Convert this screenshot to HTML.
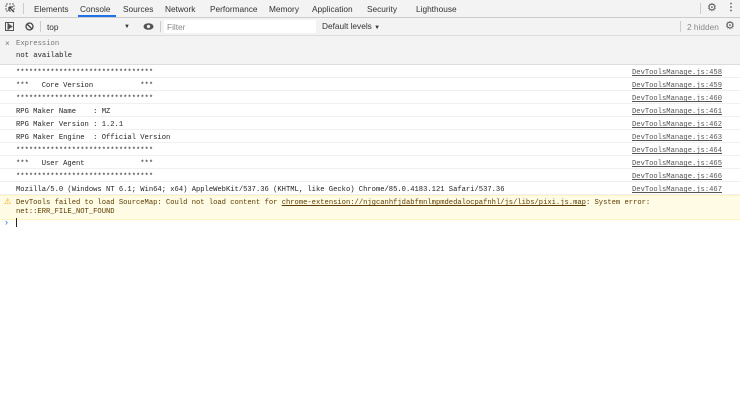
<!DOCTYPE html><html><head><style>
body{margin:0;width:740px;height:408px;background:#fff;font-family:"Liberation Sans",sans-serif;overflow:hidden;position:relative}
.a{position:absolute}
.tabs{top:0;left:0;width:740px;height:17px;background:#f3f3f3;border-bottom:1px solid #ccc;font-size:8.3px;color:#333}
.tabs span{position:absolute;top:4px}
.tb{top:18px;left:0;width:740px;height:17px;background:#f3f3f3;border-bottom:1px solid #ddd;font-size:8.3px;color:#333}
.exp{top:36px;left:0;width:740px;height:28px;background:#f3f3f3;border-bottom:1px solid #ddd;font-family:"Liberation Mono",monospace;font-size:7.2px}
.row{position:absolute;left:0;width:740px;height:12px;border-bottom:1px solid #f0f0f0;font-family:"Liberation Mono",monospace;font-size:7.15px;color:#222;white-space:pre}
.row .t{position:absolute;left:16px;top:4px}
.row .s{position:absolute;left:632px;top:4px;text-decoration:underline;color:#555}
</style></head><body>
<div class="a tabs">
<svg class="a" style="left:5px;top:3px" width="11" height="11"><rect x="1" y="1" width="8" height="7" fill="none" stroke="#666" stroke-dasharray="2 1"/><path d="M4 4l5 5M4 4v4M4 4h4" stroke="#444" stroke-width="1.3"/></svg>
<div class="a" style="left:23px;top:3px;width:1px;height:11px;background:#ccc"></div>
<span style="left:34px">Elements</span>
<span style="left:80px">Console</span>
<div class="a" style="left:78px;top:15px;width:38px;height:2px;background:#1a73e8"></div>
<span style="left:123px">Sources</span>
<span style="left:165px">Network</span>
<span style="left:210px">Performance</span>
<span style="left:269px">Memory</span>
<span style="left:312px">Application</span>
<span style="left:367px">Security</span>
<span style="left:416px">Lighthouse</span>
<div class="a" style="left:700px;top:3px;width:1px;height:11px;background:#ccc"></div>
<span style="left:707px;top:1px;font-size:11px;color:#555">⚙</span>
<span style="left:726px;top:2px;font-size:10px;color:#555;font-weight:bold">⋮</span>
</div>
<div class="a tb">
<svg class="a" style="left:5px;top:4px" width="10" height="10"><rect x="0.5" y="0.5" width="8" height="8" fill="none" stroke="#555"/><path d="M3 0v9M4 2.5l3 2-3 2z" stroke="#555" fill="#555"/></svg>
<svg class="a" style="left:25px;top:4px" width="10" height="10"><circle cx="4.5" cy="4.5" r="3.5" fill="none" stroke="#444" stroke-width="1.3"/><path d="M2 2l5 5" stroke="#444" stroke-width="1.3"/></svg>
<div class="a" style="left:40px;top:3px;width:1px;height:11px;background:#ccc"></div>
<span class="a" style="left:47px;top:4px">top</span>
<span class="a" style="left:124px;top:6px;font-size:6px">▼</span>
<svg class="a" style="left:143px;top:4px" width="11" height="9"><ellipse cx="5.5" cy="4.5" rx="5" ry="3.3" fill="#555"/><circle cx="5.5" cy="4.5" r="1.6" fill="#f3f3f3"/></svg>
<div class="a" style="left:160px;top:3px;width:1px;height:11px;background:#ccc"></div>
<div class="a" style="left:164px;top:2px;width:152px;height:13px;background:#fff"></div>
<span class="a" style="left:167px;top:4px;color:#888">Filter</span>
<span class="a" style="left:322px;top:3px">Default levels <span style="font-size:6px">▼</span></span>
<div class="a" style="left:680px;top:3px;width:1px;height:11px;background:#ccc"></div>
<span class="a" style="left:687px;top:4px;color:#888">2 hidden</span>
<span class="a" style="left:725px;top:1px;font-size:11px;color:#555">⚙</span>
</div>
<div class="a exp">
<span class="a" style="left:5px;top:3px;color:#777;font-family:'Liberation Sans';font-size:8px">×</span>
<span class="a" style="left:16px;top:4px;color:#777">Expression</span>
<span class="a" style="left:16px;top:16px;color:#222">not available</span>
</div>
<div class="row" style="top:65px"><span class="t">********************************</span><span class="s">DevToolsManage.js:458</span></div>
<div class="row" style="top:78px"><span class="t">***   Core Version           ***</span><span class="s">DevToolsManage.js:459</span></div>
<div class="row" style="top:91px"><span class="t">********************************</span><span class="s">DevToolsManage.js:460</span></div>
<div class="row" style="top:104px"><span class="t">RPG Maker Name    : MZ</span><span class="s">DevToolsManage.js:461</span></div>
<div class="row" style="top:117px"><span class="t">RPG Maker Version : 1.2.1</span><span class="s">DevToolsManage.js:462</span></div>
<div class="row" style="top:130px"><span class="t">RPG Maker Engine  : Official Version</span><span class="s">DevToolsManage.js:463</span></div>
<div class="row" style="top:143px"><span class="t">********************************</span><span class="s">DevToolsManage.js:464</span></div>
<div class="row" style="top:156px"><span class="t">***   User Agent             ***</span><span class="s">DevToolsManage.js:465</span></div>
<div class="row" style="top:169px"><span class="t">********************************</span><span class="s">DevToolsManage.js:466</span></div>
<div class="row" style="top:182px"><span class="t">Mozilla/5.0 (Windows NT 6.1; Win64; x64) AppleWebKit/537.36 (KHTML, like Gecko) Chrome/85.0.4183.121 Safari/537.36</span><span class="s">DevToolsManage.js:467</span></div>
<div class="a" style="top:195px;left:0;width:740px;height:23px;background:#fffbe5;border-top:1px solid #fff5c2;border-bottom:1px solid #fff5c2;font-family:'Liberation Mono',monospace;font-size:7.15px;color:#5c3c00;white-space:pre">
<span class="a" style="left:4px;top:1px;color:#f2a600;font-size:8px;font-family:'DejaVu Sans'">⚠</span>
<span class="a" style="left:16px;top:3px">DevTools failed to load SourceMap: Could not load content for <u>chrome-extension://njgcanhfjdabfmnlmpmdedalocpafnhl/js/libs/pixi.js.map</u>: System error:</span>
<span class="a" style="left:16px;top:12px">net::ERR_FILE_NOT_FOUND</span>
</div>
<span class="a" style="left:5px;top:217px;color:#1a73e8;font-size:9px">›</span>
<div class="a" style="left:16px;top:218px;width:1px;height:9px;background:#222"></div>
</body></html>
